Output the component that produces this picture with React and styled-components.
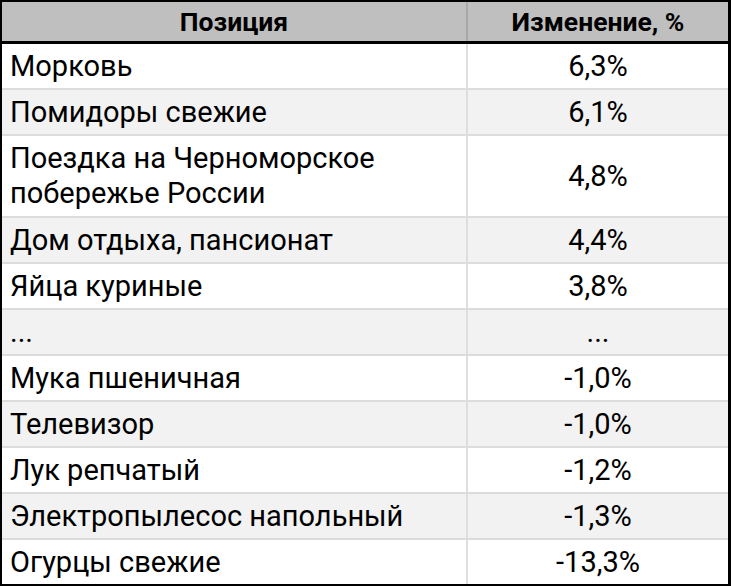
import React from "react";
import styled, { createGlobalStyle } from "styled-components";

const Global = createGlobalStyle`
  html, body { margin: 0; padding: 0; background: #fff; }
  body { font-family: Roboto, "Liberation Sans", sans-serif; color: #000; }
`;

const Frame = styled.div`
  width: 731px;
  box-sizing: border-box;
  border-style: solid;
  border-color: #000;
  border-width: 2px 3px 2px 2px;
`;

const Table = styled.table`
  width: 100%;
  border-collapse: collapse;
  table-layout: fixed;
`;

const HeadCell = styled.th`
  background: #bfbfbf;
  height: 39px;
  padding: 0;
  font-size: 26.5px;
  font-weight: 700;
  text-align: center;
  border-bottom: 3px solid #000;
  border-left: ${(p) => (p.$first ? "none" : "2px solid #a8a8a8")};
  width: ${(p) => (p.$first ? "464px" : "auto")};
`;

const Row = styled.tr`
  background: ${(p) => (p.$alt ? "#f2f2f2" : "#fff")};
  border-top: ${(p) => (p.$first ? "none" : "2px solid #dcdcdc")};
`;

const Cell = styled.td`
  height: ${(p) => (p.$tall ? "80px" : "44px")};
  padding: 0 8px;
  font-size: 29px;
  line-height: 35px;
  text-align: ${(p) => (p.$num ? "center" : "left")};
  border-left: ${(p) => (p.$num ? "2px solid #dedede" : "none")};
`;

const rows = [
  ["Морковь", "6,3%"],
  ["Помидоры свежие", "6,1%"],
  ["Поездка на Черноморское побережье России", "4,8%", true],
  ["Дом отдыха, пансионат", "4,4%"],
  ["Яйца куриные", "3,8%"],
  ["...", "..."],
  ["Мука пшеничная", "-1,0%"],
  ["Телевизор", "-1,0%"],
  ["Лук репчатый", "-1,2%"],
  ["Электропылесос напольный", "-1,3%"],
  ["Огурцы свежие", "-13,3%"],
];

export default function App() {
  return (
    <>
      <Global />
      <Frame>
        <Table>
          <thead>
            <tr>
              <HeadCell $first>Позиция</HeadCell>
              <HeadCell>Изменение, %</HeadCell>
            </tr>
          </thead>
          <tbody>
            {rows.map(([name, val, tall], i) => (
              <Row key={i} $alt={i % 2 === 1} $first={i === 0}>
                <Cell $tall={tall}>
                  {tall ? (
                    <>
                      Поездка на Черноморское
                      <br />
                      побережье России
                    </>
                  ) : (
                    name
                  )}
                </Cell>
                <Cell $num $tall={tall}>{val}</Cell>
              </Row>
            ))}
          </tbody>
        </Table>
      </Frame>
    </>
  );
}
